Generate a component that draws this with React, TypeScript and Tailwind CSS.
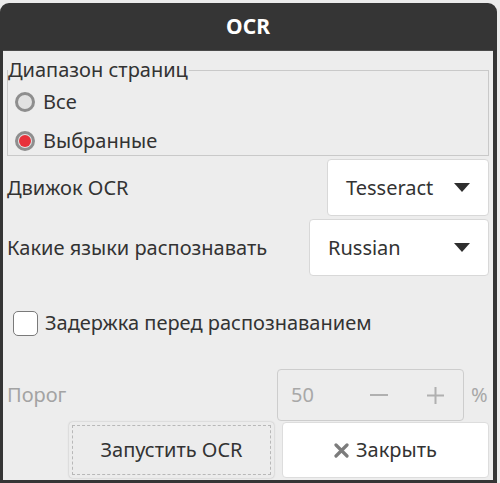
import { useState } from "react";

const font = { fontFamily: '"Noto Sans", "Open Sans", sans-serif' };

function Radio({ checked, label, onClick }: { checked: boolean; label: string; onClick: () => void }) {
  return (
    <button type="button" onClick={onClick} className="flex items-center gap-[8px] h-[26px]">
      <span className="w-[20px] h-[20px] rounded-full border-[3px] border-[#8e8e8e] bg-[#e2e2e2] flex items-center justify-center">
        {checked && <span className="w-[12px] h-[12px] rounded-full bg-[#e8313b]" />}
      </span>
      <span>{label}</span>
    </button>
  );
}

function Combo({ value, width }: { value: string; width: string }) {
  return (
    <div className={`${width} h-[57px] bg-white border border-[#d8d8d8] rounded-[4px] flex items-center justify-between pl-[18px] pr-[18px]`}>
      <span>{value}</span>
      <svg width="16" height="9" viewBox="0 0 16 9">
        <path d="M0 0 H16 L8 9 Z" fill="#2e2e2e" />
      </svg>
    </div>
  );
}

export default function App() {
  const [range, setRange] = useState("selected");
  const [delay, setDelay] = useState(false);

  return (
    <div className="w-[500px] h-[483px] bg-[#ebebeb] overflow-hidden" style={font}>
      <div className="w-[497px] h-[481px] mt-[3px] bg-[#353535] rounded-t-[9px] flex flex-col pl-[3px] pr-[4px] pb-[4px]">
        <div className="h-[47px] flex items-center justify-center text-white font-bold text-[21px]">OCR</div>
        <div className="flex-1 bg-[#ededed] text-[20px] leading-[26px] text-[#333333] pl-[4px] pr-[4px] border-t border-[#4a4a4a]">
          {/* page range group */}
          <div className="relative mt-[19px] h-[86px] border border-[#c9c9c9] pl-[7px] pt-[18px]">
            <span className="absolute left-0 top-[-12px] bg-[#ededed] leading-[22px] pr-[1px]">Диапазон страниц</span>
            <div className="flex flex-col gap-[13px] items-start">
              <Radio checked={range === "all"} label="Все" onClick={() => setRange("all")} />
              <Radio checked={range === "selected"} label="Выбранные" onClick={() => setRange("selected")} />
            </div>
          </div>

          <div className="flex items-center justify-between mt-[3px]">
            <span>Движок OCR</span>
            <Combo value="Tesseract" width="w-[162px]" />
          </div>
          <div className="flex items-center justify-between mt-[3px]">
            <span>Какие языки распознавать</span>
            <Combo value="Russian" width="w-[180px]" />
          </div>

          <button type="button" onClick={() => setDelay(!delay)} className="flex items-center gap-[7px] mt-[34px] ml-[6px]">
            <span className="w-[25px] h-[25px] rounded-[5px] border-[1.5px] border-[#7a7a7a] bg-white flex items-center justify-center">
              {delay && <span className="text-[14px] leading-none">✓</span>}
            </span>
            <span>Задержка перед распознаванием</span>
          </button>

          <div className="flex items-center mt-[33px]">
            <span className="text-[#a3a3a3] flex-1">Порог</span>
            <div className="w-[187px] h-[52px] border border-[#cdcdcd] rounded-[4px] flex items-center text-[#a8a8a8]">
              <span className="pl-[13px] flex-1">50</span>
              <span className="w-[56px] flex justify-center">
                <svg width="18" height="2" viewBox="0 0 18 2"><rect width="18" height="2" fill="#b0b0b0" /></svg>
              </span>
              <span className="w-[56px] flex justify-center">
                <svg width="17" height="17" viewBox="0 0 17 17"><rect y="7.5" width="17" height="2" fill="#b0b0b0" /><rect x="7.5" width="2" height="17" fill="#b0b0b0" /></svg>
              </span>
            </div>
            <span className="text-[#a8a8a8] w-[25px] pl-[7px]">%</span>
          </div>

          <div className="flex justify-end gap-[8px] mt-[1px] pr-[0px]">
            <button type="button" className="w-[205px] h-[56px] rounded-[4px] bg-[#ececec] shadow-[0_0_2px_rgba(0,0,0,0.25)] p-[3px]">
              <span className="w-full h-full border border-dashed border-[#b8b8b8] flex items-center justify-center">Запустить OCR</span>
            </button>
            <button type="button" className="w-[207px] h-[56px] rounded-[4px] bg-white border border-[#dddddd] flex items-center justify-center gap-[7px]">
              <svg width="15" height="15" viewBox="0 0 15 15">
                <path d="M2 2 L13 13 M13 2 L2 13" stroke="#7c7c7c" strokeWidth="3.2" strokeLinecap="round" />
              </svg>
              <span>Закрыть</span>
            </button>
          </div>
        </div>
      </div>
    </div>
  );
}
